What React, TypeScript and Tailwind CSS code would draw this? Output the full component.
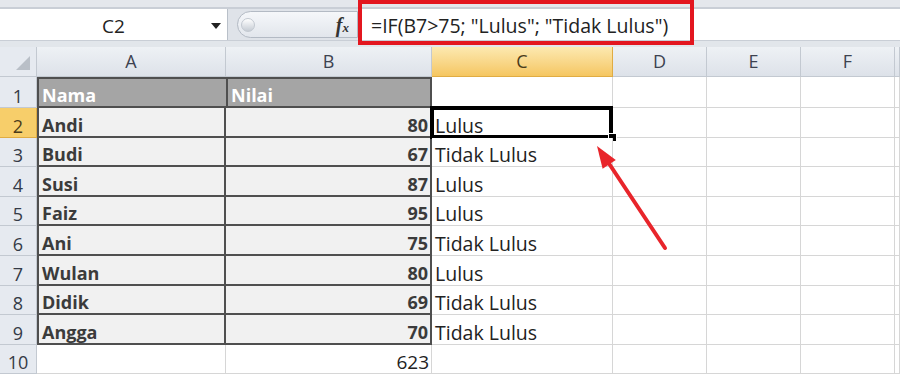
import React from 'react';

const rows: [string, number, string][] = [
  ['Andi', 80, 'Lulus'],
  ['Budi', 67, 'Tidak Lulus'],
  ['Susi', 87, 'Lulus'],
  ['Faiz', 95, 'Lulus'],
  ['Ani', 75, 'Tidak Lulus'],
  ['Wulan', 80, 'Lulus'],
  ['Didik', 69, 'Tidak Lulus'],
  ['Angga', 70, 'Tidak Lulus'],
];

const columns = ['A', 'B', 'C', 'D', 'E', 'F', ''];

const grid = 'border-r border-b border-[#d6d6d6]';
const tableCell = 'border-r-2 border-b-2 border-[#4f4f4f] bg-[#f1f1f1] font-bold text-[#3b3b3b]';
// cell text sits on the bottom of the row, like Excel
const cellText = 'flex items-end leading-[22px]';

function ColumnHeader({ label }: { label: string }) {
  const active = label === 'C';
  return (
    <div
      className={`flex items-center justify-center border-r border-b text-[18px] ${
        active
          ? 'bg-gradient-to-b from-[#fce9b0] to-[#f5c660] border-[#e0ac43] text-[#4a3b1a]'
          : 'bg-gradient-to-b from-[#eef1f5] to-[#dde2e9] border-[#c3c9d1] text-[#3d4250]'
      }`}
    >
      {label}
    </div>
  );
}

function RowHeader({ n }: { n: number }) {
  const active = n === 2;
  return (
    <div
      className={`flex items-end justify-center leading-[22px] border-r border-b text-[18px] ${
        active
          ? 'bg-[#f7ce6a] border-[#e0ac43] text-[#4a3b1a]'
          : 'bg-[#e6eaf0] border-[#c3c9d1] text-[#343a46]'
      }`}
    >
      {n}
    </div>
  );
}

function Blank({ count }: { count: number }) {
  return (
    <>
      {Array.from({ length: count }).map((_, i) => (
        <div key={i} className={`${grid} bg-white`} />
      ))}
    </>
  );
}

export default function App() {
  return (
    <div
      className="relative w-[900px] h-[379px] overflow-hidden bg-white text-[#222]"
      style={{ fontFamily: '"Open Sans", "Noto Sans", sans-serif' }}
    >
      {/* ribbon remnant */}
      <div className="h-[9px] bg-[#e4e7ec] border-b-2 border-[#c9ced6]" />

      {/* formula bar */}
      <div className="flex h-[31px] bg-[#dfe3e9]">
        <div className="relative flex w-[228px] items-center justify-center pt-[3px] bg-white border-r border-[#b9c0c9] text-[19px] text-[#222]">
          C2
          <span className="absolute right-[6px] top-[14px] h-0 w-0 border-l-[5px] border-r-[5px] border-t-[6px] border-l-transparent border-r-transparent border-t-[#222]" />
        </div>
        <div className="flex w-[130px] items-center py-[2px] pl-[9px]">
          <div className="flex h-full flex-1 items-center rounded-l-full border border-[#b3bac4] bg-gradient-to-b from-[#f5f7fa] to-[#e2e6ec] pl-[3px]">
            <span className="h-[14px] w-[14px] rounded-full bg-gradient-to-b from-[#ffffff] to-[#c6ccd4] border border-[#c2c8d0]" />
            <span
              className="ml-auto mr-[8px] italic font-bold text-[20px] leading-none text-[#333]"
              style={{ fontFamily: '"Liberation Serif", "DejaVu Serif", serif' }}
            >
              f<span className="text-[13px]">x</span>
            </span>
          </div>
        </div>
        <div className="flex flex-1 items-center pt-[3px] bg-white pl-[13px] text-[19.5px] text-[#222]">
          =IF(B7&gt;75; "Lulus"; "Tidak Lulus")
        </div>
      </div>
      <div className="h-[7px] bg-[#e2e6eb] border-t border-[#c9ced6]" />

      {/* sheet */}
      <div className="grid grid-cols-[37px_189px_206px_181px_94px_94px_94px_1fr] grid-rows-[30px_31px_repeat(10,29.6px)] text-[18px]">
        <div className="relative border-r border-b border-[#c3c9d1] bg-[#e6eaf0]">
          <span
            className="absolute bottom-[6px] right-[6px] h-0 w-0"
            style={{ borderBottom: '14px solid #b9bfc7', borderLeft: '14px solid transparent' }}
          />
        </div>
        {columns.map((c, i) => (
          <ColumnHeader key={i} label={c} />
        ))}

        <RowHeader n={1} />
        <div className={`${cellText} border-2 border-r-0 border-[#4f4f4f] bg-[#a5a5a5] pl-[3px] font-bold text-white`}>
          Nama
        </div>
        <div className={`${cellText} border-2 border-[#4f4f4f] bg-[#a5a5a5] pl-[3px] font-bold text-white`}>
          Nilai
        </div>
        <Blank count={5} />

        {rows.map(([name, score, status], i) => (
          <React.Fragment key={name}>
            <RowHeader n={i + 2} />
            <div className={`${cellText} border-l-2 pl-[3px] ${tableCell}`}>{name}</div>
            <div className={`${cellText} justify-end pr-[2px] ${tableCell}`}>{score}</div>
            <div className={`relative ${cellText} pl-[3px] bg-white text-[19.5px] text-[#222] ${grid}`}>
              {status}
              {i === 0 && (
                <>
                  <span className="absolute -left-[2px] -top-[2px] -right-[1px] -bottom-[2px] border-4 border-black" />
                  <span className="absolute -right-[5px] -bottom-[5px] h-[9px] w-[9px] bg-black border border-white" />
                </>
              )}
            </div>
            <Blank count={4} />
          </React.Fragment>
        ))}

        <RowHeader n={10} />
        <div className={`${grid} bg-white`} />
        <div className={`${cellText} justify-end pr-[2px] bg-white text-[19px] text-[#222] ${grid}`}>623</div>
        <Blank count={5} />
      </div>

      {/* annotation: formula highlight */}
      <div className="absolute left-[358px] top-0 h-[45px] w-[336px] border-4 border-[#e3161f]" />

      {/* annotation: arrow to C2 */}
      <svg className="absolute left-0 top-0 pointer-events-none" width="900" height="379" viewBox="0 0 900 379">
        <line x1="608" y1="162" x2="665" y2="248" stroke="#e8252b" strokeWidth="4" strokeLinecap="round" />
        <polygon points="597,146 602.6,168.7 615.8,159.9" fill="#e8252b" />
      </svg>
    </div>
  );
}
